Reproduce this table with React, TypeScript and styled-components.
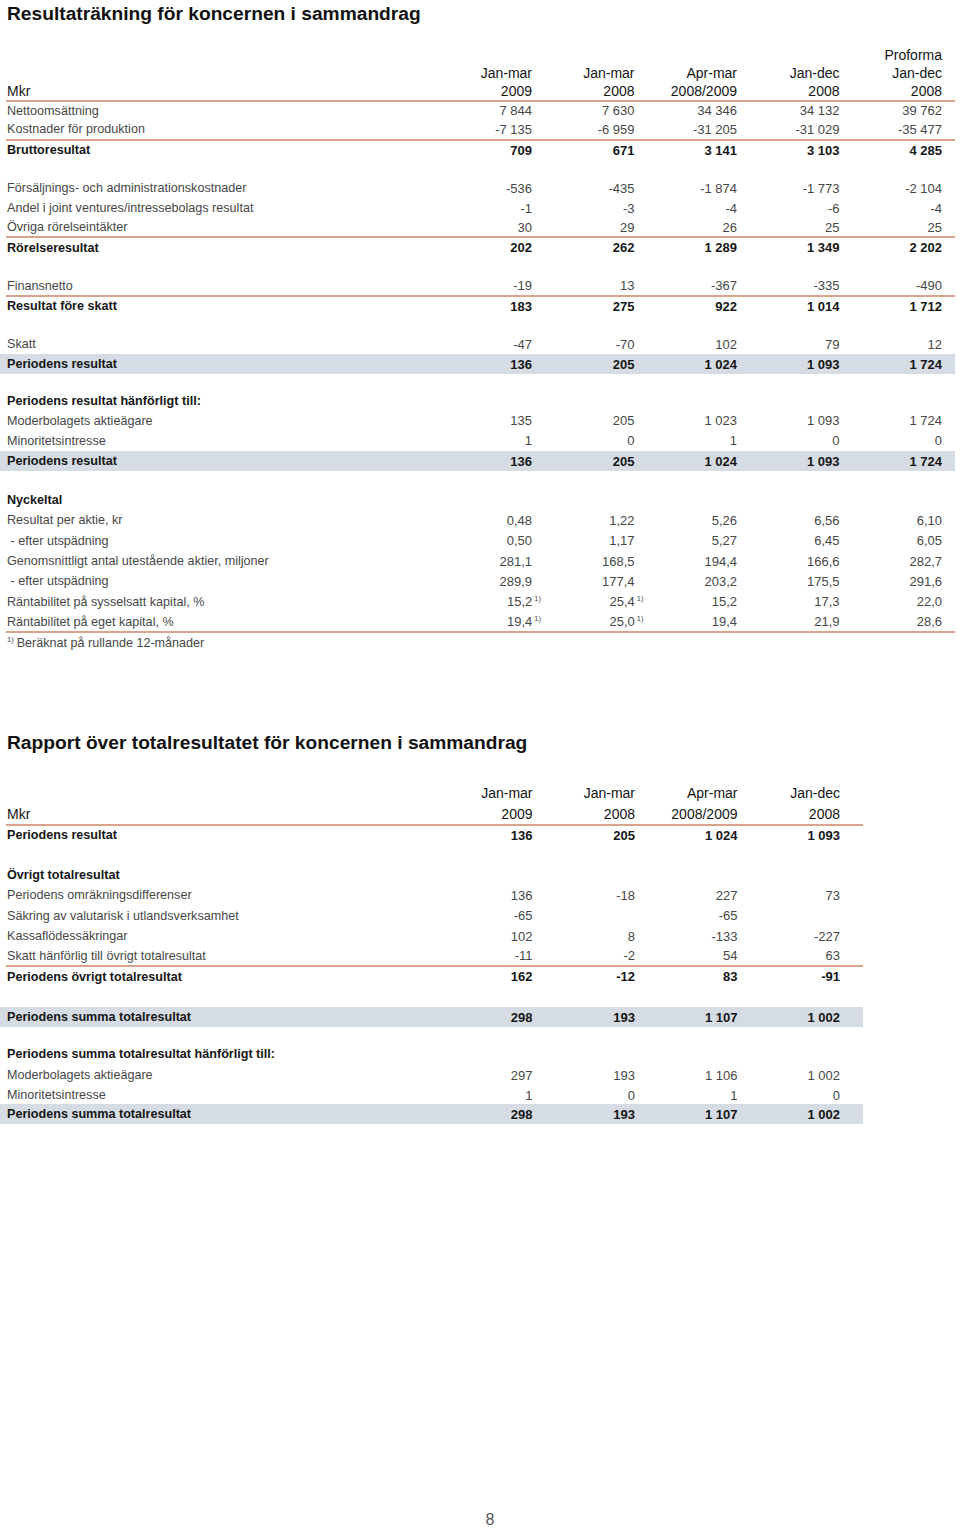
import React from 'react';
import styled, { createGlobalStyle } from 'styled-components';

const Global = createGlobalStyle`
  html, body { margin: 0; padding: 0; background: #fff; }
  body { font-family: "Liberation Sans", Arial, sans-serif; }
`;

type Tone = 'head' | 'light' | 'strong';

type Spec =
  | { k: 'row'; tone: Tone; h: number; label: React.ReactNode; vals?: string[]; band?: boolean }
  | { k: 'rule' }
  | { k: 'gap'; h: number };

const Page = styled.div`
  width: 960px;
  height: 1528px;
  display: flex;
  flex-direction: column;
  background: #fff;
  overflow: hidden;
`;

const Title = styled.h1<{ $mt: number }>`
  margin: ${(p) => p.$mt}px 0 0;
  padding-left: 7px;
  height: 28px;
  line-height: 28px;
  font-size: 19.2px;
  font-weight: 700;
  color: #111;
`;

const Table = styled.div<{ $w: number; $mt: number }>`
  width: ${(p) => p.$w}px;
  margin-top: ${(p) => p.$mt}px;
  display: flex;
  flex-direction: column;
`;

const toneColor: Record<Tone, string> = { head: '#151515', light: '#474747', strong: '#161616' };

const Row = styled.div<{ $h: number; $cols: number; $pr: number; $band?: boolean; $tone: Tone }>`
  display: grid;
  grid-template-columns: 1fr repeat(${(p) => p.$cols}, 102.5px);
  align-items: center;
  height: ${(p) => p.$h}px;
  padding: 0 ${(p) => p.$pr}px 0 7px;
  background: ${(p) => (p.$band ? '#d5dce3' : 'transparent')};
  font-size: ${(p) => (p.$tone === 'head' ? 14 : 13)}px;
  color: ${(p) => toneColor[p.$tone]};
  font-weight: ${(p) => (p.$tone === 'strong' ? 700 : 400)};
`;

const Label = styled.div<{ $tone: Tone }>`
  white-space: nowrap;
  font-size: ${(p) => (p.$tone === 'head' ? '14px' : '12.6px')};
`;

const Num = styled.div`
  text-align: right;
  white-space: nowrap;
`;

const Sup = styled.sup`
  font-size: 7.5px;
  line-height: 0;
  vertical-align: 5px;
  margin-left: 2px;
  margin-right: -9px;
`;

const FootSup = styled.sup`
  font-size: 7.5px;
  line-height: 0;
  vertical-align: 5px;
  margin-right: 3px;
`;

const Rule = styled.div`
  height: 2px;
  margin-left: 6px;
  background: #d9a48c;
`;

const Gap = styled.div<{ $h: number }>`
  height: ${(p) => p.$h}px;
`;

const PageNo = styled.div`
  margin-top: auto;
  height: 16px;
  line-height: 16px;
  padding-left: 20px;
  text-align: center;
  font-size: 16px;
  color: #555;
`;

const renderVal = (v: string, i: number) => {
  if (v.endsWith('^')) {
    return (
      <Num key={i}>
        {v.slice(0, -1)}
        <Sup>1)</Sup>
      </Num>
    );
  }
  return <Num key={i}>{v}</Num>;
};

const FinTable: React.FC<{ specs: Spec[]; cols: number; w: number; pr: number; mt: number }> = ({ specs, cols, w, pr, mt }) => (
  <Table $w={w} $mt={mt}>
    {specs.map((s, i) => {
      if (s.k === 'rule') return <Rule key={i} />;
      if (s.k === 'gap') return <Gap key={i} $h={s.h} />;
      const vals = s.vals ?? [];
      return (
        <Row key={i} $h={s.h} $cols={cols} $pr={pr} $band={s.band} $tone={s.tone}>
          <Label $tone={s.tone}>{s.label}</Label>
          {Array.from({ length: cols }).map((_, j) => renderVal(vals[j] ?? '', j))}
        </Row>
      );
    })}
  </Table>
);

const r = (tone: Tone, h: number, label: React.ReactNode, vals?: string[], band?: boolean): Spec => ({ k: 'row', tone, h, label, vals, band });
const rule: Spec = { k: 'rule' };
const gap = (h: number): Spec => ({ k: 'gap', h });

const table1: Spec[] = [
  r('head', 19, '', ['', '', '', '', 'Proforma']),
  r('head', 18, '', ['Jan-mar', 'Jan-mar', 'Apr-mar', 'Jan-dec', 'Jan-dec']),
  r('head', 18, 'Mkr', ['2009', '2008', '2008/2009', '2008', '2008']),
  rule,
  r('light', 17, 'Nettoomsättning', ['7 844', '7 630', '34 346', '34 132', '39 762']),
  r('light', 20, 'Kostnader för produktion', ['-7 135', '-6 959', '-31 205', '-31 029', '-35 477']),
  rule,
  r('strong', 18, 'Bruttoresultat', ['709', '671', '3 141', '3 103', '4 285']),
  gap(19),
  r('light', 20, 'Försäljnings- och administrationskostnader', ['-536', '-435', '-1 874', '-1 773', '-2 104']),
  r('light', 20, 'Andel i joint ventures/intressebolags resultat', ['-1', '-3', '-4', '-6', '-4']),
  r('light', 18, 'Övriga rörelseintäkter', ['30', '29', '26', '25', '25']),
  rule,
  r('strong', 19, 'Rörelseresultat', ['202', '262', '1 289', '1 349', '2 202']),
  gap(19),
  r('light', 19, 'Finansnetto', ['-19', '13', '-367', '-335', '-490']),
  rule,
  r('strong', 18, 'Resultat före skatt', ['183', '275', '922', '1 014', '1 712']),
  gap(19),
  r('light', 20, 'Skatt', ['-47', '-70', '102', '79', '12']),
  r('strong', 20, 'Periodens resultat', ['136', '205', '1 024', '1 093', '1 724'], true),
  gap(17),
  r('strong', 20, 'Periodens resultat hänförligt till:'),
  r('light', 19, 'Moderbolagets aktieägare', ['135', '205', '1 023', '1 093', '1 724']),
  r('light', 21, 'Minoritetsintresse', ['1', '0', '1', '0', '0']),
  r('strong', 20, 'Periodens resultat', ['136', '205', '1 024', '1 093', '1 724'], true),
  gap(19),
  r('strong', 20, 'Nyckeltal'),
  r('light', 20, 'Resultat per aktie, kr', ['0,48', '1,22', '5,26', '6,56', '6,10']),
  r('light', 21, '\u00a0- efter utspädning', ['0,50', '1,17', '5,27', '6,45', '6,05']),
  r('light', 20, 'Genomsnittligt antal utestående aktier, miljoner', ['281,1', '168,5', '194,4', '166,6', '282,7']),
  r('light', 20, '\u00a0- efter utspädning', ['289,9', '177,4', '203,2', '175,5', '291,6']),
  r('light', 21, 'Räntabilitet på sysselsatt kapital, %', ['15,2^', '25,4^', '15,2', '17,3', '22,0']),
  r('light', 19, 'Räntabilitet på eget kapital, %', ['19,4^', '25,0^', '19,4', '21,9', '28,6']),
  rule,
  r(
    'light',
    20,
    <>
      <FootSup>1)</FootSup>Beräknat på rullande 12-månader
    </>
  ),
];

const table2: Spec[] = [
  r('head', 20, '', ['Jan-mar', 'Jan-mar', 'Apr-mar', 'Jan-dec']),
  r('head', 21, 'Mkr', ['2009', '2008', '2008/2009', '2008']),
  rule,
  r('strong', 18, 'Periodens resultat', ['136', '205', '1 024', '1 093']),
  gap(21),
  r('strong', 20, 'Övrigt totalresultat'),
  r('light', 20, 'Periodens omräkningsdifferenser', ['136', '-18', '227', '73']),
  r('light', 21, 'Säkring av valutarisk i utlandsverksamhet', ['-65', '', '-65', '']),
  r('light', 20, 'Kassaflödessäkringar', ['102', '8', '-133', '-227']),
  r('light', 19, 'Skatt hänförlig till övrigt totalresultat', ['-11', '-2', '54', '63']),
  rule,
  r('strong', 19, 'Periodens övrigt totalresultat', ['162', '-12', '83', '-91']),
  gap(21),
  r('strong', 20, 'Periodens summa totalresultat', ['298', '193', '1 107', '1 002'], true),
  gap(17),
  r('strong', 20, 'Periodens summa totalresultat hänförligt till:'),
  r('light', 22, 'Moderbolagets aktieägare', ['297', '193', '1 106', '1 002']),
  r('light', 18, 'Minoritetsintresse', ['1', '0', '1', '0']),
  r('strong', 20, 'Periodens summa totalresultat', ['298', '193', '1 107', '1 002'], true),
];

export default function App() {
  return (
    <Page>
      <Global />
      <Title $mt={0}>Resultaträkning för koncernen i sammandrag</Title>
      <FinTable specs={table1} cols={5} w={955} pr={13} mt={17} />
      <Title $mt={76}>Rapport över totalresultatet för koncernen i sammandrag</Title>
      <FinTable specs={table2} cols={4} w={863} pr={23} mt={26} />
      <PageNo>8</PageNo>
    </Page>
  );
}
